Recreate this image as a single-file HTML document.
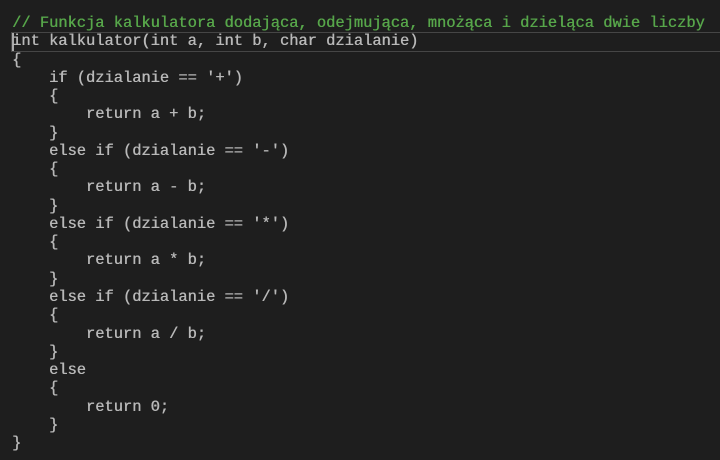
<!DOCTYPE html>
<html><head><meta charset="utf-8"><style>
html,body{margin:0;padding:0;background:#1e1e1e;width:720px;height:460px;overflow:hidden}
pre{margin:0;position:absolute;left:12px;top:14px;font-family:"Liberation Mono",monospace;font-size:15.4px;line-height:18.26px;color:#b8b8b8;white-space:pre;text-shadow:0.4px 0 0 currentColor}
.c{color:#57a64a}
.hl{position:absolute;left:11px;top:32px;width:720px;height:18px;border:1px solid #464646;border-right:none}
.cur{position:absolute;left:12px;top:33px;width:2px;height:18px;background:#aaa}
</style></head><body>
<div class="hl"></div><div class="cur"></div>
<pre><span class="c">// Funkcja kalkulatora dodająca, odejmująca, mnożąca i dzieląca dwie liczby</span>
int kalkulator(int a, int b, char dzialanie)
{
    if (dzialanie == '+')
    {
        return a + b;
    }
    else if (dzialanie == '-')
    {
        return a - b;
    }
    else if (dzialanie == '*')
    {
        return a * b;
    }
    else if (dzialanie == '/')
    {
        return a / b;
    }
    else
    {
        return 0;
    }
}</pre>
</body></html>
